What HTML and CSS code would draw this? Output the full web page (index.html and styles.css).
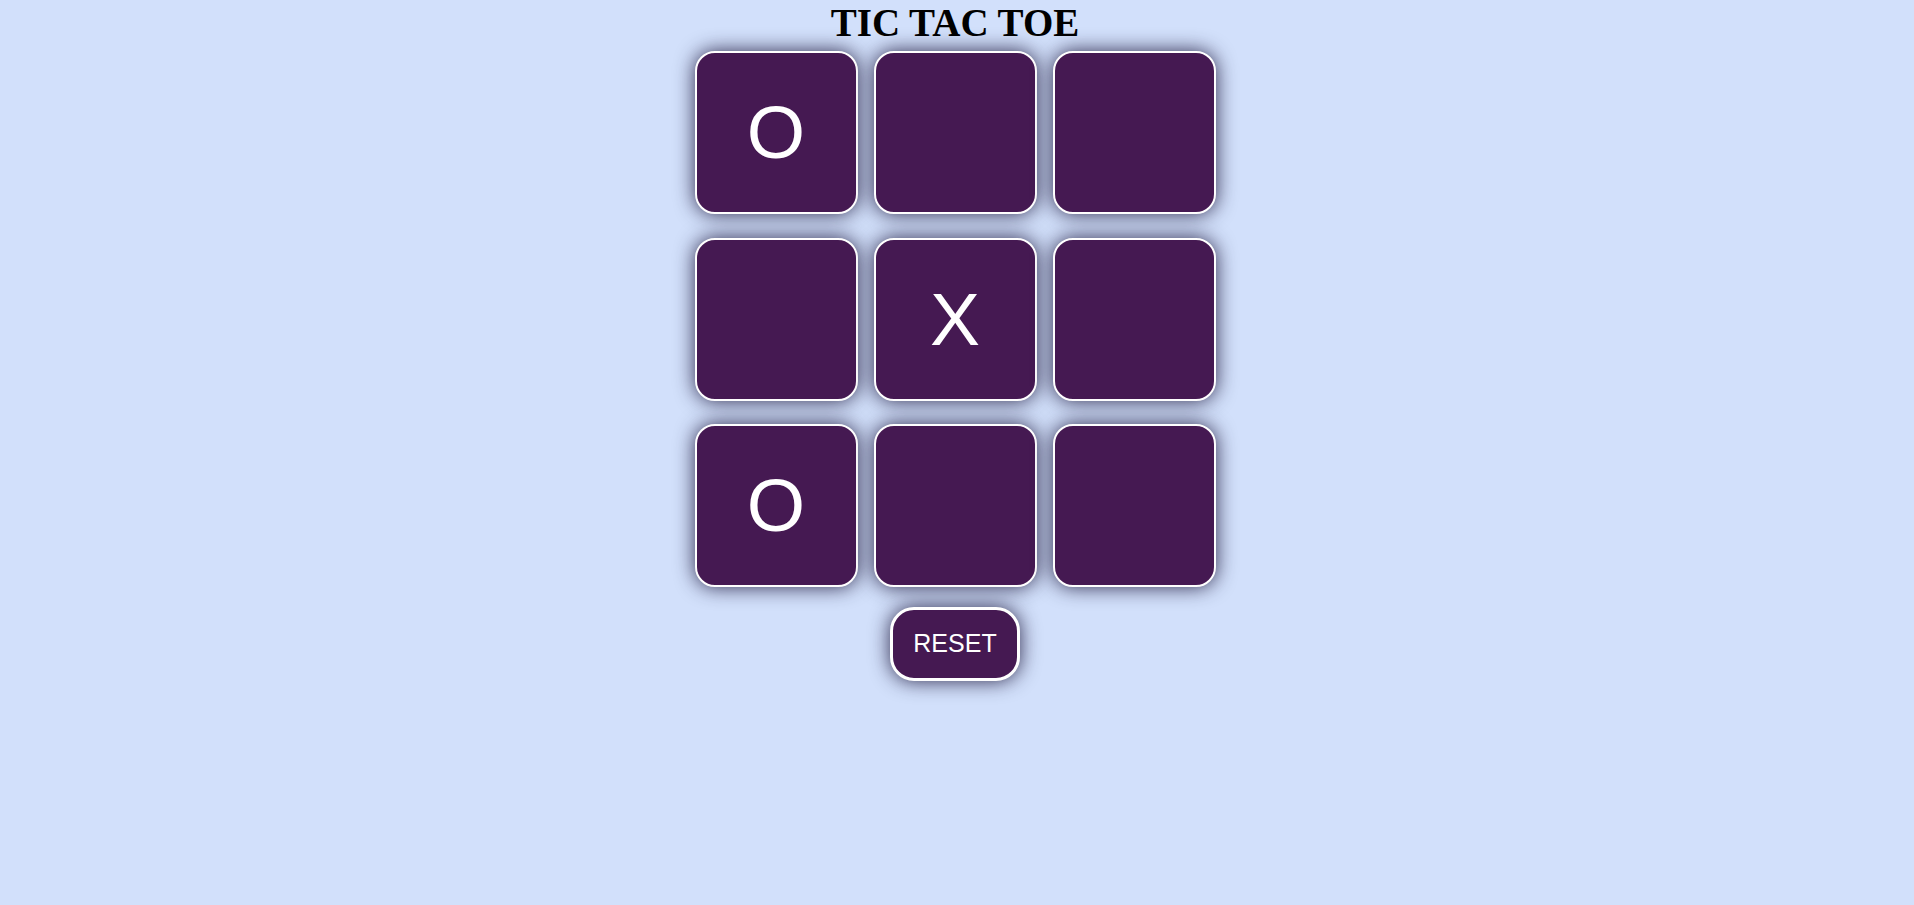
FILE: index.html
```html
<!DOCTYPE html>
<html lang="en">
<head>
<meta charset="UTF-8">
<title>Tic Tac Toe</title>
<link rel="stylesheet" href="styles.css">
</head>
<body>
  <main class="page">
    <h1 class="title">TIC TAC TOE</h1>
    <div class="game">
      <button class="box">O</button>
      <button class="box"></button>
      <button class="box"></button>
      <button class="box"></button>
      <button class="box">X</button>
      <button class="box"></button>
      <button class="box">O</button>
      <button class="box"></button>
      <button class="box"></button>
    </div>
    <button class="reset">RESET</button>
  </main>
</body>
</html>
```

FILE: styles.css
```css
html, body {
  margin: 0;
  padding: 0;
}

body {
  background: #d2e0fb;
  font-family: "Liberation Sans", Arial, sans-serif;
  min-height: 100vh;
}

.page {
  display: flex;
  flex-direction: column;
  align-items: center;
  padding-right: 4px;
  padding-bottom: 60px;
}

.title {
  margin: 0;
  font-family: "Liberation Serif", "Times New Roman", serif;
  font-weight: bold;
  font-size: 39px;
  line-height: 45px;
  color: #000;
}

.game {
  display: grid;
  grid-template-columns: repeat(3, 163px);
  grid-auto-rows: 163px;
  column-gap: 16px;
  row-gap: 23.5px;
  margin-top: 6px;
}

.box {
  box-sizing: border-box;
  width: 163px;
  height: 163px;
  margin: 0;
  padding: 0;
  border: 2px solid #fff;
  border-radius: 20px;
  background: #451952;
  color: #fff;
  font-family: "Liberation Sans", Arial, sans-serif;
  font-size: 75px;
  line-height: 1;
  box-shadow: 0 0 20px rgba(15, 8, 45, 0.85);
  display: flex;
  align-items: center;
  justify-content: center;
  cursor: pointer;
}

.reset {
  margin-top: 20px;
  padding: 20px 20px;
  border: 3px solid #fff;
  border-radius: 24px;
  background: #451952;
  color: #fff;
  font-family: "Liberation Sans", Arial, sans-serif;
  font-size: 25px;
  line-height: 27.5px;
  box-shadow: 0 0 20px rgba(15, 8, 45, 0.85);
  cursor: pointer;
}
```
